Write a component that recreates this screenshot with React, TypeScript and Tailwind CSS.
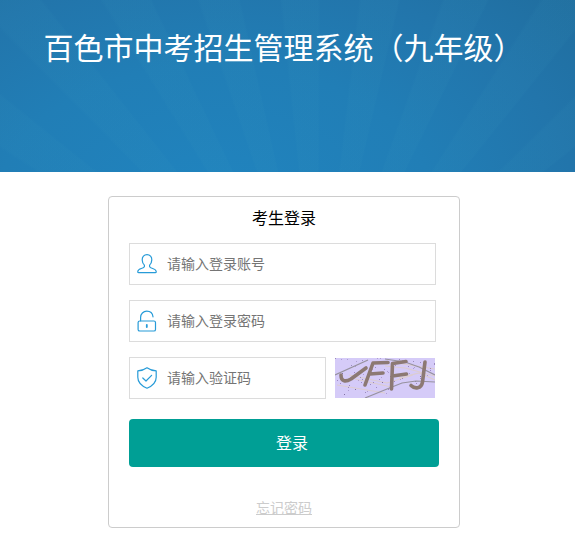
import React, { useState } from 'react';

interface FieldProps {
  icon: React.ReactNode;
  placeholder: string;
  type?: string;
  className: string;
}

const Field: React.FC<FieldProps> = ({ icon, placeholder, type = 'text', className }) => {
  const [value, setValue] = useState('');

  return (
    <div className={`relative h-[42px] border border-[#dcdcdc] bg-white ${className}`}>
      <div className="absolute left-[7px] top-[9px]">{icon}</div>
      <input
        type={type}
        value={value}
        onChange={(e) => setValue(e.target.value)}
        placeholder={placeholder}
        className="block h-full w-full pb-[2px] pl-[37px] text-sm text-black outline-none placeholder:text-[#757575]"
      />
    </div>
  );
};

const UserIcon = () => (
  <svg width="22" height="22" viewBox="0 0 22 22" fill="none" stroke="#279bd8" strokeWidth="1.2" strokeLinejoin="round">
    <path d="M10 1.700C7 1.700 5.100 3.900 5.200 6.900c.1 2.300.9 4.100 2.200 5.200v1.500c-.2 1-1.500 1.400-3.100 1.900-2 .6-3.300 1.400-3.500 3-.1.900.1 1.100.8 1.100h16.800c.7 0 .9-.2.8-1.100-.2-1.600-1.500-2.400-3.500-3-1.600-.5-2.900-.9-3.100-1.900v-1.500c1.300-1.100 2.100-2.900 2.200-5.200.1-3-1.800-5.200-4.800-5.200z" />
  </svg>
);

const LockIcon = () => (
  <svg width="22" height="22" viewBox="0 0 22 22" fill="none" stroke="#279bd8" strokeWidth="1.2" strokeLinecap="round">
    <rect x="1.1" y="11" width="17.4" height="10" rx="1.6" />
    <path d="M3.600 10.800V7.500C3.600 3.800 6.300 1.200 9.800 1.200c3.200 0 5.800 2.200 6.200 5.600" />
    <path d="M9.800 15v2" strokeWidth="1.8" />
  </svg>
);

const ShieldIcon = () => (
  <svg width="22" height="22" viewBox="0 0 22 22" fill="none" stroke="#279bd8" strokeWidth="1.2" strokeLinejoin="round" strokeLinecap="round">
    <path d="M10 .8c2.700 2 5.600 2.900 9.200 3.100v6.300c0 5-3.400 8.500-9.200 11C4.200 18.700.8 15.200.8 10.200V3.900C4.400 3.700 7.300 2.800 10 .8z" />
    <path d="M5.800 11l3.200 3 5.600-5.700" />
  </svg>
);

const Captcha = () => {
  const dots = Array.from({ length: 80 }, (_, i) => ({
    x: (i * 37 + ((i * i) % 11)) % 100,
    y: (i * 23 + ((i * i) % 7)) % 40,
  })).filter((d) => d.y < 26 || d.x < 55);

  return (
    <svg width="100" height="40" viewBox="0 0 100 40" fill="none" className="block">
      <rect width="100" height="40" fill="#d5cbf8" />
      <g stroke="#dccdd0" strokeWidth="1.2">
        <path d="M14 17l38 8 26-8M50 8l20 2 30 8M2 27l48 8M20 21l36 8M62 5l38 6M64 20l20-5 16 7" />
      </g>
      {dots.map((d, i) => (
        <rect key={i} x={d.x} y={d.y} width="1" height="1" fill={i % 3 ? '#8f78b4' : '#6c5a8c'} opacity={i % 2 ? 0.8 : 0.55} />
      ))}
      <g stroke="#97929f" strokeWidth="1.2">
        <path d="M0 17L33 2M30 40l22-9 15-6 14-2 19 1M50 1l20 3 14 5 16 8" />
      </g>
      <g stroke="#8c7973" strokeWidth="3.6" strokeLinecap="round" strokeLinejoin="round">
        <path d="M6 17c0 7 5 7 10 4l15-11" />
        <path d="M30 27l8-22 15-.500M35 16l13-1" />
        <path d="M56.500 31l1-25.500L71 3.500M57.500 18l14-2" />
        <path d="M90 4l-2.500 20c-1 7-8 7-11.500 3.500" />
      </g>
    </svg>
  );
};

export default function App() {
  return (
    <div className="h-[551px] overflow-hidden bg-white font-['Noto_Sans_CJK_SC',sans-serif] text-black">
      <header className="h-[172px] bg-[repeating-conic-gradient(from_0.4deg_at_318px_350px,transparent_0deg_6.2deg,rgba(60,155,190,0.08)_6.7deg_12.5deg,transparent_12.857deg),radial-gradient(ellipse_480px_300px_at_215px_200px,#2084bf_0%,#217eb6_45%,#2275ab_75%,#206e9f_100%)] pl-[43.5px] pt-[23px]">
        <h1 className="whitespace-nowrap text-[30px] font-normal leading-[46px] text-white">百色市中考招生管理系统（九年级）</h1>
      </header>

      <main className="ml-[108px] mt-6 h-[332px] w-[352px] rounded-[4px] border border-[#ccc] px-5">
        <h2 className="h-[46px] pt-2 text-center text-base font-normal leading-6">考生登录</h2>

        <div className="flex flex-col gap-[15px]">
          <Field icon={<UserIcon />} placeholder="请输入登录账号" className="w-[307px]" />
          <Field icon={<LockIcon />} placeholder="请输入登录密码" type="password" className="w-[307px]" />
          <div className="flex items-center gap-[9px]">
            <Field icon={<ShieldIcon />} placeholder="请输入验证码" className="w-[197px]" />
            <Captcha />
          </div>
        </div>

        <button className="mt-5 flex h-12 w-[310px] items-center justify-center rounded-[4px] bg-[#009f95] pb-[2px] pl-[16px] text-base text-white">
          登录
        </button>

        <div className="mt-[29px] text-center text-sm leading-[22px]">
          <a href="#" className="text-[#ccc] underline">忘记密码</a>
        </div>
      </main>
    </div>
  );
}
